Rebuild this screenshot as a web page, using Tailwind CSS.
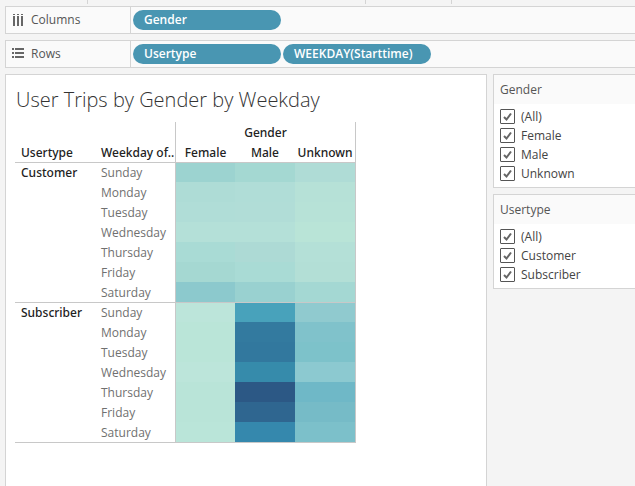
<!DOCTYPE html>
<html lang="en">
<head>
<meta charset="utf-8">
<meta name="viewport" content="width=device-width, initial-scale=1">
<title>User Trips by Gender by Weekday</title>
<script src="https://cdn.jsdelivr.net/npm/@tailwindcss/browser@4"></script>
</head>
<body class="flex h-screen flex-col overflow-hidden bg-[#f4f4f4] font-['Open_Sans','Noto_Sans',sans-serif] text-[12px] leading-5 text-[#333]">
  <div class="flex h-1 shrink-0" aria-hidden="true">
    <div class="w-[88px] border-r border-[#d4d4d4]"></div>
    <div class="w-[278px] border-r border-[#d4d4d4]"></div>
    <div class="w-[86px] border-r border-[#d4d4d4]"></div>
  </div>

  <section class="mt-0.5 ml-[5px] flex h-7 shrink-0 border-y border-l border-[#d4d4d4] bg-[#fafafa]">
    <h2 class="flex w-[125px] items-center gap-[7px] border-r border-[#d4d4d4] pl-1.5 text-[#555]">
      <svg class="size-3" viewBox="0 0 12 12" fill="#666" aria-hidden="true"><path d="M1 0h2v1H1zM5 0h2v1H5zM9 0h2v1H9zM1 2h2v10H1zM5 2h2v10H5zM9 2h2v10H9z"/></svg>
      Columns
    </h2>
    <div class="flex items-center gap-0.5 pl-0.5 font-semibold text-white">
      <button class="h-5 w-[148px] rounded-full bg-[#4996b2] pl-[11px] text-left">Gender</button>
    </div>
  </section>

  <section class="mt-1.5 ml-[5px] flex h-7 shrink-0 border-y border-l border-[#d4d4d4] bg-[#fafafa]">
    <h2 class="flex w-[125px] items-center gap-[7px] border-r border-[#d4d4d4] pl-1.5 text-[#555]">
      <svg class="size-3" viewBox="0 0 12 12" fill="#666" aria-hidden="true"><path d="M0 0h2v2H0zM0 4h2v2H0zM0 8h2v2H0zM3 0h9v2H3zM3 4h9v2H3zM3 8h9v2H3z"/></svg>
      Rows
    </h2>
    <div class="flex items-center gap-0.5 pl-0.5 font-semibold text-white">
      <button class="h-5 w-[148px] rounded-full bg-[#4996b2] pl-[11px] text-left">Usertype</button>
      <button class="h-5 w-[148px] rounded-full bg-[#4996b2] pl-[11px] text-left">WEEKDAY(Starttime)</button>
    </div>
  </section>

  <div class="mt-1.5 flex min-h-0 flex-1 gap-1.5 pl-[5px]">
    <main class="min-w-0 flex-1 border-x border-t border-[#d4d4d4] bg-white px-[9px]">
      <h1 class="h-[47px] pt-[11px] pl-px text-[20px] leading-7 font-light whitespace-nowrap">User Trips by Gender by Weekday</h1>
      <table class="w-[341px] table-fixed border-separate border-spacing-0 border-b border-[#c8c8c8]">
        <colgroup><col class="w-20"><col class="w-20"><col class="w-[60px]"><col class="w-[60px]"><col class="w-[61px]"></colgroup>
        <thead class="font-['Noto_Sans','Open_Sans',sans-serif] leading-[18px] text-[#222]">
          <tr class="h-5">
            <td colspan="2" class="p-0"></td>
            <th colspan="3" class="border-x border-[#c8c8c8] p-0 pt-0.5 font-medium">Gender</th>
          </tr>
          <tr class="h-5">
            <th class="p-0 pt-0.5 pl-1.5 text-left font-medium">Usertype</th>
            <th class="p-0 pt-0.5 pl-1.5 text-left font-medium whitespace-nowrap">Weekday of..</th>
            <th class="border-l border-[#c8c8c8] p-0 pt-0.5 font-medium">Female</th>
            <th class="p-0 pt-0.5 font-medium">Male</th>
            <th class="border-r border-[#c8c8c8] p-0 pt-0.5 font-medium">Unknown</th>
          </tr>
        </thead>
        <tbody id="customer" class="text-[#707070]"></tbody>
        <tbody id="subscriber" class="text-[#707070]"></tbody>
      </table>
    </main>

    <aside class="flex w-[142px] shrink-0 flex-col gap-1.5" id="filters"></aside>
  </div>

  <script>
    const days = ['Sunday', 'Monday', 'Tuesday', 'Wednesday', 'Thursday', 'Friday', 'Saturday'];
    const heat = {
      Customer: [
        ['#9cd3d0', '#a4d8d2', '#afdcd6'], ['#aedcd6', '#b0ddd7', '#b6e1d7'],
        ['#b0ddd7', '#b1ddd7', '#b7e2d7'], ['#b4e0d8', '#b4e0d8', '#b9e4d7'],
        ['#a9dbd5', '#addad5', '#b4e0d7'], ['#a5d8d2', '#a9dbd5', '#b3dfd6'],
        ['#8cc9cd', '#99d1d0', '#a4d8d3']
      ],
      Subscriber: [
        ['#bce5da', '#48a2bb', '#90cacf'], ['#bae5d8', '#337a9f', '#80c2cb'],
        ['#bae5d8', '#32789e', '#7dc2ca'], ['#bce5da', '#368bab', '#8cc9d0'],
        ['#b9e4d8', '#2c5885', '#6fb8c7'], ['#b9e4d8', '#2f6690', '#76bbc7'],
        ['#bae5d9', '#3588ad', '#7cc0ca']
      ]
    };
    for (const [type, rows] of Object.entries(heat)) {
      document.getElementById(type.toLowerCase()).innerHTML = rows.map((colors, i) => {
        const line = i === 0 ? 'border-t border-[#c8c8c8]' : '';
        const group = i === 0
          ? `<th rowspan="7" class="border-t border-[#c8c8c8] p-0 pl-1.5 text-left align-top font-['Noto_Sans','Open_Sans',sans-serif] leading-[19px] font-medium text-[#222]">${type}</th>`
          : '';
        const side = ['border-l border-[#c8c8c8]', '', 'border-r border-[#c8c8c8]'];
        const cells = colors.map((c, j) => `<td class="p-0 ${line} ${side[j]}" style="background:${c}"></td>`).join('');
        return `<tr class="h-5">${group}<th class="p-0 pl-1.5 text-left leading-[19px] font-normal ${line}">${days[i]}</th>${cells}</tr>`;
      }).join('');
    }

    const filters = { Gender: ['(All)', 'Female', 'Male', 'Unknown'], Usertype: ['(All)', 'Customer', 'Subscriber'] };
    document.getElementById('filters').innerHTML = Object.entries(filters).map(([name, items]) => `
      <fieldset class="border-y border-l border-[#d4d4d4] bg-white pb-1">
        <h2 class="mb-[3px] h-[29px] bg-[#fafafa] pl-1.5 leading-[29px] text-[#555]">${name}</h2>
        ${items.map(item => `
        <label class="flex h-[19px] items-center gap-1.5 pl-1.5 text-[#444]">
          <span class="grid">
            <input type="checkbox" checked class="peer col-start-1 row-start-1 size-[15px] appearance-none rounded-[1px] border border-[#555] bg-white">
            <svg class="invisible col-start-1 row-start-1 size-[15px] peer-checked:visible pointer-events-none" viewBox="0 0 15 15" fill="none" stroke="#666" stroke-width="2" aria-hidden="true"><path d="M4 8l2.5 2.5L11 4.5"/></svg>
          </span>
          ${item}
        </label>`).join('')}
      </fieldset>`).join('');
  </script>
</body>
</html>
